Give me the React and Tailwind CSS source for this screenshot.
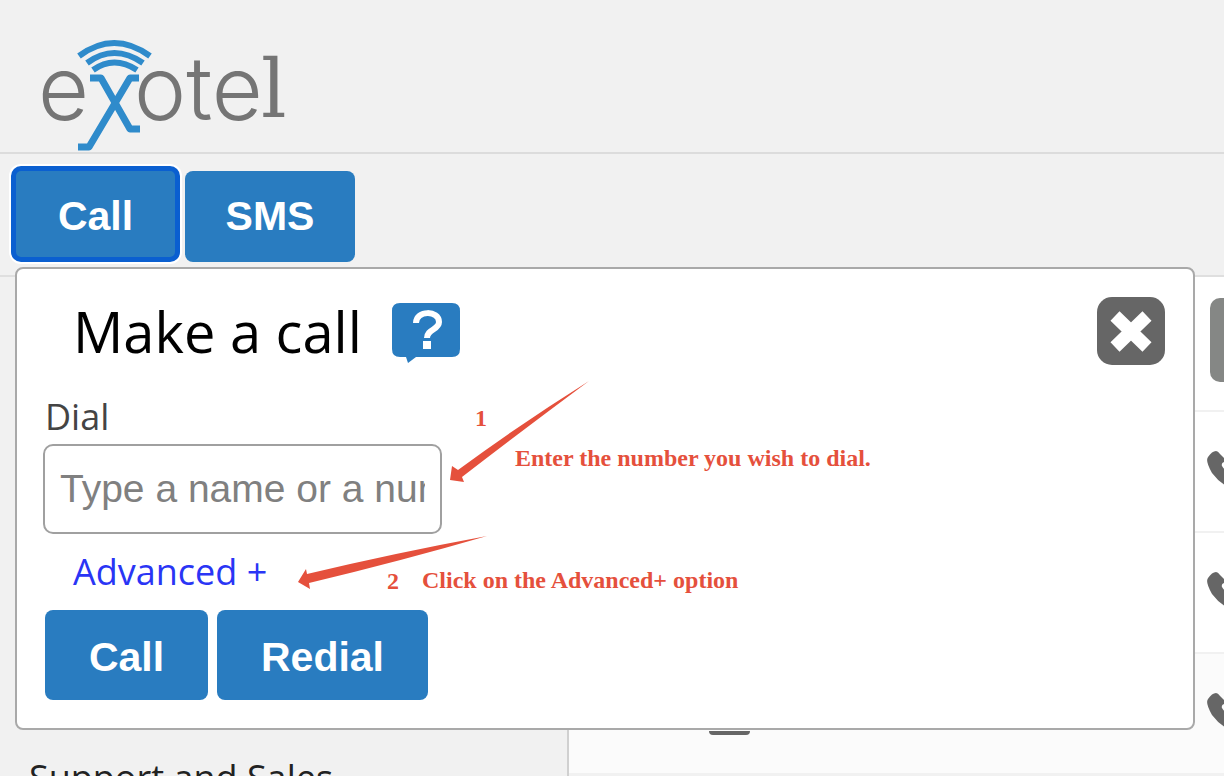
import { useState } from "react";

const rows = [
  { id: 1, shade: "bg-white" },
  { id: 2, shade: "bg-white" },
  { id: 3, shade: "bg-[#fbfbfb]" },
];

function Logo() {
  return (
    <svg className="h-[120px] w-[260px]" viewBox="-5 -6 260 120" role="img" aria-label="exotel">
      <g fill="#757575" fontFamily="Inter, sans-serif" fontWeight="300" fontSize="88">
        <text x="-3" y="81">e</text>
        <text x="93" y="81">ote</text>
        <text x="220" y="78" fontFamily="DejaVu Serif, serif" fontWeight="400" fontSize="80">l</text>
      </g>
      {/* signal waves and the running figure */}
      <g fill="none" stroke="#2f8bcb" strokeLinejoin="round">
        <path strokeWidth="6" d="M38 17 Q73 -9 109 17" />
        <path strokeWidth="6" d="M46 24 Q73 4 102 24" />
        <path strokeWidth="6" d="M52 31 Q73 16 96 31" />
        <path strokeWidth="7" d="M49 39 H60 L89 90 H99" />
        <path strokeWidth="7" d="M98 39 H89 L48 108 H37" />
      </g>
    </svg>
  );
}

function HelpIcon() {
  return (
    <svg className="h-[60px] w-[70px]" viewBox="0 0 70 60" aria-hidden="true">
      <path fill="#297cc0" d="M9 0 H61 Q69 0 69 8 V46 Q69 54 61 54 H25 L17 60 L15 54 H9 Q1 54 1 46 V8 Q1 0 9 0 Z" />
      <path fill="none" stroke="#fff" strokeWidth="6" d="M25 20 C25 7 48 7 48 19 C48 27 36 26 36 35" />
      <rect x="32" y="38" width="8" height="8" fill="#fff" />
    </svg>
  );
}

function CloseIcon() {
  return (
    <svg className="h-[68px] w-[68px]" viewBox="0 0 68 68" aria-hidden="true">
      <rect width="68" height="68" rx="15" fill="#666" />
      <path stroke="#fff" strokeWidth="13" d="M18 19 L50 50 M50 19 L18 50" />
    </svg>
  );
}

function PhoneIcon() {
  return (
    <svg className="h-[42px] w-[42px]" viewBox="0 0 42 42" aria-hidden="true">
      <path
        fill="#666"
        d="M9 0 Q11 0 13 3 L18 8 Q20 10 17 11 Q14 12 15 15 Q19 21 24 24 L27 23 Q30 20 33 23 L40 29 Q42 32 39 35 Q34 41 26 38 Q14 34 5 22 Q-2 10 1 6 Q5 0 9 0 Z"
      />
    </svg>
  );
}

function CallPanel({ onClose }) {
  const [number, setNumber] = useState("");

  return (
    <section className="absolute top-full right-[29px] left-[15px] z-10 -mt-2 rounded-lg border-2 border-[#a9a9a9] bg-white px-[26px] pt-7 pb-7">
      <div className="flex items-start pr-[2px] pl-[30px]">
        <h1 className="text-[56px] leading-[68px] text-black">Make a call</h1>
        <button type="button" aria-label="Help" className="mt-[6px] ml-[29px]">
          <HelpIcon />
        </button>
        <button type="button" aria-label="Close" onClick={onClose} className="ml-auto">
          <CloseIcon />
        </button>
      </div>

      <label htmlFor="dial" className="mt-7 block pl-[2px] text-[36px] leading-[48px] text-[#444]">
        Dial
      </label>
      <input
        id="dial"
        type="text"
        value={number}
        onChange={(e) => setNumber(e.target.value)}
        placeholder="Type a name or a number"
        className="mt-[3px] block h-[90px] w-[399px] rounded-[10px] border-2 border-[#a0a0a0] bg-white px-[15px] font-['Liberation_Sans',sans-serif] text-[39px] text-[#444] outline-none placeholder:text-[#808080]"
      />
      <a href="#advanced" className="mt-[14px] ml-[30px] inline-block text-[36px] leading-[48px] text-[#2a35f5]">
        Advanced +
      </a>
      <div className="mt-[14px] flex gap-[9px] pl-[2px] font-['Liberation_Sans',sans-serif] text-[41px] font-bold text-white">
        <button type="button" className="h-[90px] w-[163px] rounded-lg bg-[#297cc0] pt-[6px]">Call</button>
        <button type="button" className="h-[90px] w-[211px] rounded-lg bg-[#297cc0] pt-[6px]">Redial</button>
      </div>

      {/* Step notes */}
      <div className="pointer-events-none absolute inset-0 font-['Liberation_Serif',serif] text-[24px] leading-[28px] font-bold text-[#e5503c]">
        <svg className="absolute top-[112px] left-[280px] h-[212px] w-[294px]" viewBox="0 0 294 212" fill="currentColor" aria-hidden="true">
          <path d="M292 0 Q225 42 161 89 L155 85 L153 99 L167 101 L165 96 Q230 46 292 0 Z" />
          <path d="M190 155 Q98 172 10 193 L9 188 L1 201 L13 208 L12 202 Q104 180 190 155 Z" />
        </svg>
        <span className="absolute top-[135px] left-[458px]">1</span>
        <span className="absolute top-[175px] left-[498px]">Enter the number you wish to dial.</span>
        <span className="absolute top-[298px] left-[370px]">2</span>
        <span className="absolute top-[297px] left-[405px]">Click on the Advanced+ option</span>
      </div>
    </section>
  );
}

export default function App() {
  const [open, setOpen] = useState(true);

  return (
    <div className="flex h-screen flex-col overflow-hidden bg-[#f1f1f1] font-['Open_Sans',sans-serif]">
      <header className="h-[154px] shrink-0 border-b-2 border-[#dcdcdc] pt-[33px] pl-9">
        <Logo />
      </header>

      <nav className="relative shrink-0 border-b-2 border-[#dfdfdf] pt-3 pb-[13px] pl-[11px]">
        <div className="flex items-end gap-[5px] font-['Liberation_Sans',sans-serif] text-[41px] font-bold text-white">
          <button
            type="button"
            onClick={() => setOpen(true)}
            className="h-[96px] w-[169px] rounded-[10px] border-[5px] border-[#0a5fd0] bg-[#297cc0] pt-[6px] ring-2 ring-white"
          >
            Call
          </button>
          <button type="button" className="h-[91px] w-[170px] rounded-lg bg-[#297cc0]">SMS</button>
        </div>
        {open && <CallPanel onClose={() => setOpen(false)} />}
      </nav>

      <div className="flex min-h-0 flex-1">
        <aside className="w-[569px] shrink-0 border-r-2 border-[#d0d0d0] pt-[477px] pl-[29px]">
          <p className="text-[36px] leading-[48px] text-[#222]">Support and Sales</p>
        </aside>

        <main className="min-w-0 flex-1">
          <div className="flex h-[135px] items-start justify-end border-b-2 border-[#f1f1f1] bg-white pt-[21px]">
            <div className="w-[14px]">
              <div className="h-[84px] w-[80px] rounded-[10px] bg-[#858785]" />
            </div>
          </div>
          {rows.map((row) => (
            <div
              key={row.id}
              className={`flex h-[121px] items-center justify-between border-b-2 border-[#f1f1f1] pl-[140px] ${row.shade}`}
            >
              <div className="h-[42px] w-[41px] rounded-sm border-b-4 border-[#666]" />
              <div className="w-[17px]">
                <div className="w-[42px]">
                  <PhoneIcon />
                </div>
              </div>
            </div>
          ))}
        </main>
      </div>
    </div>
  );
}
